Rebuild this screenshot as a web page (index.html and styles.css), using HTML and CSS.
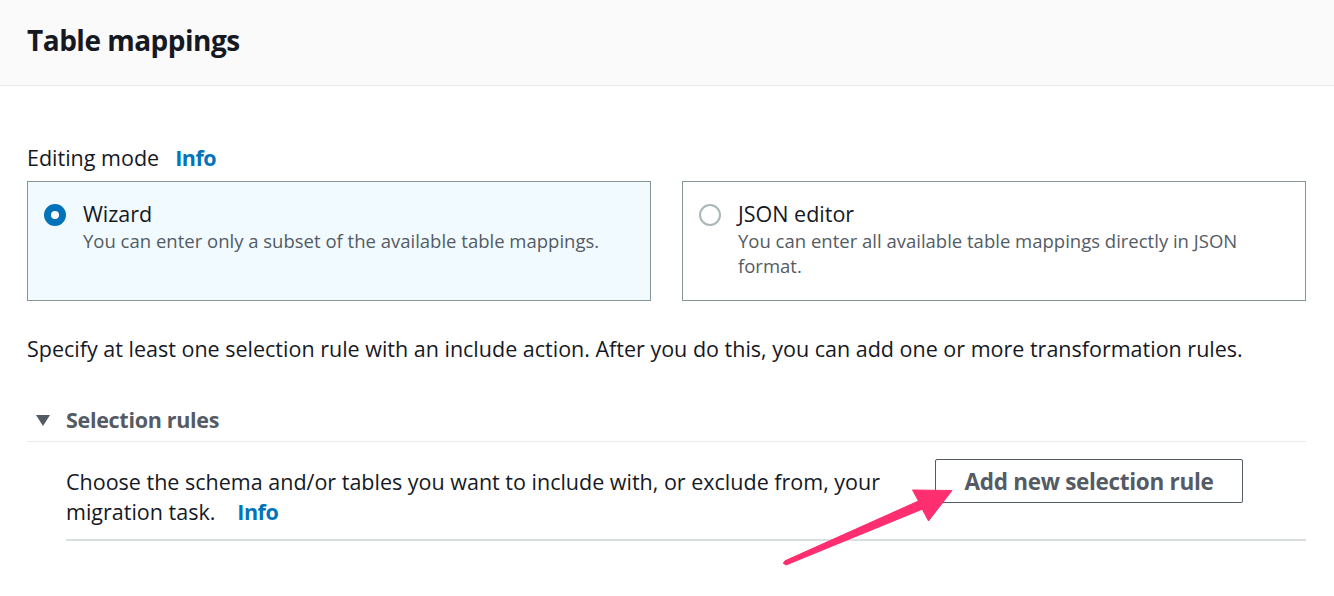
FILE: index.html
```html
<!DOCTYPE html>
<html>
<head>
<meta charset="utf-8">
<link rel="stylesheet" href="styles.css">
</head>
<body>
<div class="page">
  <header class="header">
    <h2 class="title">Table mappings</h2>
  </header>
  <main class="content">
    <div class="field-label">Editing mode <a class="info">Info</a></div>
    <div class="tiles">
      <div class="tile tile-selected">
        <span class="radio radio-on"></span>
        <div class="tile-text">
          <div class="tile-title">Wizard</div>
          <div class="tile-desc">You can enter only a subset of the available table mappings.</div>
        </div>
      </div>
      <div class="tile">
        <span class="radio"></span>
        <div class="tile-text">
          <div class="tile-title">JSON editor</div>
          <div class="tile-desc">You can enter all available table mappings directly in JSON format.</div>
        </div>
      </div>
    </div>
    <p class="spec">Specify at least one selection rule with an include action. After you do this, you can add one or more transformation rules.</p>
    <section class="expander">
      <div class="expander-head">
        <span class="caret"></span>
        <span class="expander-title">Selection rules</span>
      </div>
      <div class="expander-body">
        <div class="rule-row">
          <p class="rule-text"><span>Choose the schema and/or tables you want to include with, or exclude from, your migration task.</span><a class="info info-gap">Info</a></p>
          <button class="btn">Add new selection rule</button>
        </div>
      </div>
    </section>
  </main>
  <svg class="arrow" width="1334" height="596" viewBox="0 0 1334 596">
    <polygon points="952,490.5 912.5,490 918.5,501 785,560.8 783.3,563.2 786,565 922.3,509.2 928.5,521" fill="#ff2e70" stroke="#ff2e70" stroke-width="1" stroke-linejoin="round"/>
  </svg>
</div>
</body>
</html>
```
FILE: styles.css
```css
* { box-sizing: border-box; }
body {
  margin: 0;
  background: #ffffff;
  font-family: "Open Sans", "Noto Sans", sans-serif;
  color: #16191f;
}
.page {
  position: relative;
  width: 1334px;
  height: 596px;
  overflow: hidden;
}
.header {
  height: 86px;
  background: #fafafa;
  border-bottom: 1px solid #eaeded;
  padding: 0 27px;
  display: flex;
  align-items: center;
}
.title {
  margin: 0;
  font-size: 28px;
  font-weight: 700;
  letter-spacing: -0.5px;
  color: #16191f;
  line-height: 34px;
  padding-bottom: 6px;
}
.content {
  padding: 57px 28px 0 27px;
}
.field-label {
  font-size: 21.5px;
  line-height: 30px;
  display: flex;
  align-items: center;
  gap: 16px;
}
.info {
  color: #0073bb;
  font-weight: 700;
  font-size: 21.5px;
  letter-spacing: -0.5px;
}
.tiles {
  margin-top: 8px;
  display: grid;
  grid-template-columns: 624px 624px;
  column-gap: 31px;
}
.tile {
  height: 120px;
  border: 1px solid #879596;
  padding: 19px 16px 0 17px;
  display: flex;
  align-items: flex-start;
  gap: 16px;
  background: #ffffff;
}
.tile-selected {
  background: #f1faff;
}
.radio {
  flex: 0 0 22px;
  width: 22px;
  height: 22px;
  border-radius: 50%;
  border: 2px solid #aab7b8;
  margin-top: 3px;
  margin-left: -1px;
  margin-right: 1px;
  background: #fff;
}
.radio-on {
  border: 7px solid #0073bb;
}
.tile-title {
  font-size: 21.5px;
  line-height: 26px;
}
.tile-desc {
  font-size: 18.5px;
  line-height: 25px;
  color: #545b64;
  margin-top: 1px;
}
.spec {
  margin: 33px 0 0;
  font-size: 21.5px;
  line-height: 30px;
}
.expander {
  margin-top: 41px;
}
.expander-head {
  display: flex;
  align-items: center;
  height: 30px;
  border-bottom: 1px solid #eaeded;
  box-sizing: content-box;
  padding-bottom: 6px;
}
.caret {
  width: 0;
  height: 0;
  margin-left: 9px;
  border-left: 7px solid transparent;
  border-right: 7px solid transparent;
  border-top: 11px solid #545b64;
}
.expander-title {
  margin-left: 16px;
  font-size: 21.5px;
  font-weight: 700;
  color: #545b64;
  letter-spacing: -0.3px;
  line-height: 28px;
}
.expander-body {
  padding-left: 39px;
}
.rule-row {
  padding-top: 17px;
  padding-bottom: 12px;
  display: flex;
  align-items: flex-start;
  gap: 19px;
  border-bottom: 2px solid #d9dede;
}
.rule-text {
  flex: 0 0 850px;
  margin: 8px 0 0;
  font-size: 21.5px;
  line-height: 30px;
}
.info-gap {
  display: inline-block;
  margin-left: 22px;
}
.btn {
  width: 308px;
  height: 44px;
  border: 1px solid #545b64;
  border-radius: 2px;
  background: #ffffff;
  font-family: "Open Sans", "Noto Sans", sans-serif;
  font-size: 22.5px;
  font-weight: 700;
  letter-spacing: -0.3px;
  color: #545b64;
  padding: 0;
}
.arrow {
  position: absolute;
  left: 0;
  top: 0;
  pointer-events: none;
}
```
